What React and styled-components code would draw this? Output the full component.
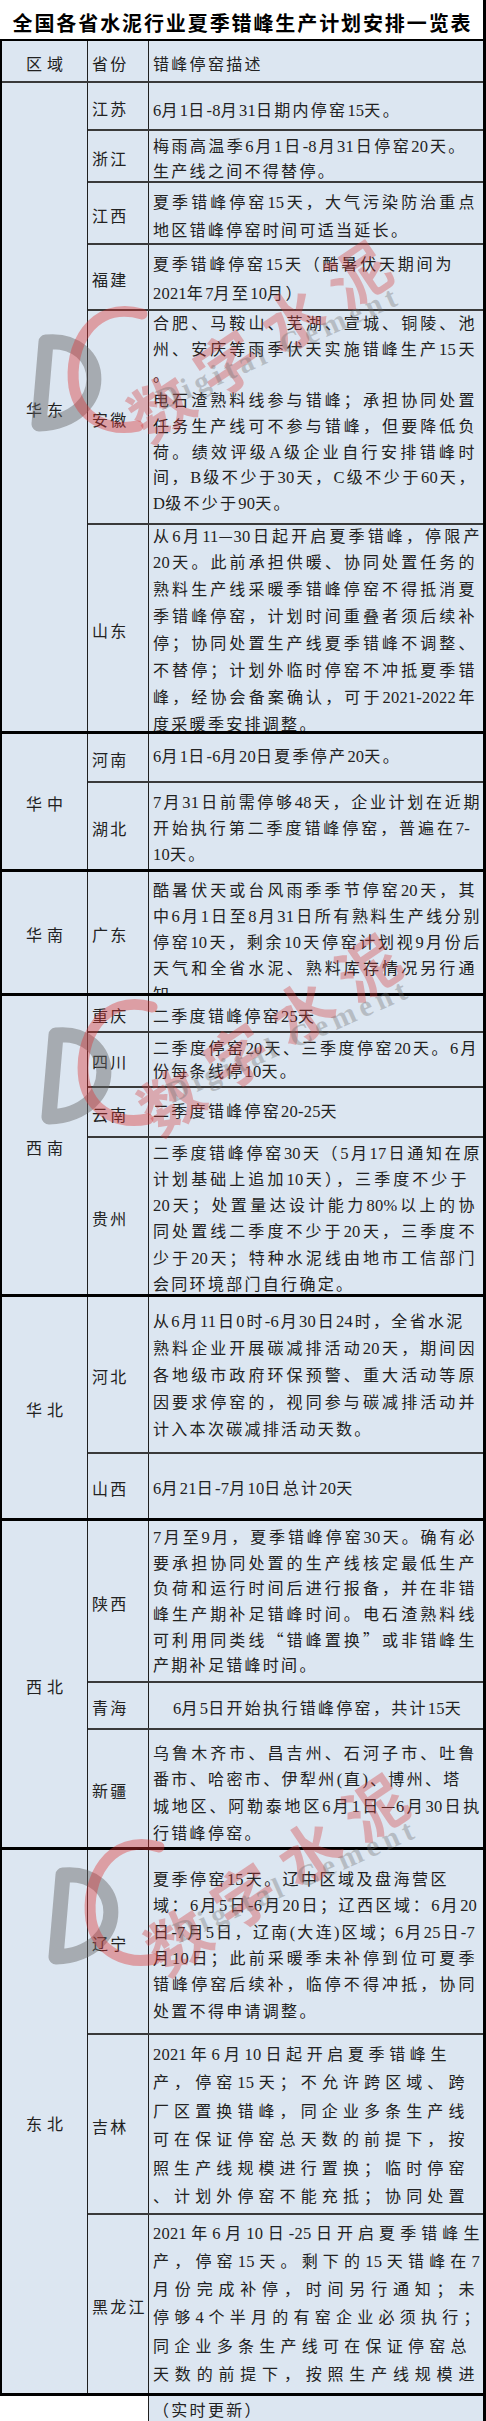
import React from 'react';
import styled, { createGlobalStyle, css } from 'styled-components';

const BLUE = '#dce6f1';
const INK = '#222';
const ROW_LINE = '#3a3a3a';
const V_LINE = '#202020';
const CJK = `"Noto Sans CJK SC", "Noto Sans CJK JP", sans-serif`;
const TEXT_LEFT = 153;

const GlobalStyle = createGlobalStyle`
  html, body { margin: 0; padding: 0; background: #fff; }
  body { font-family: ${CJK}; }
`;

const Page = styled.div`
  position: relative;
  width: 486px;
  box-sizing: border-box;
  border-right: 3px solid #000;
  overflow: hidden;
  color: ${INK};
  font-family: ${CJK};
  font-size: 16px;
`;

const Title = styled.h1`
  margin: 0;
  height: 39px;
  box-sizing: border-box;
  padding: 5px 0 0 2px;
  display: flex;
  align-items: center;
  justify-content: center;
  font-size: 20px;
  font-weight: 700;
  letter-spacing: 1.9px;
  color: #000;
  white-space: nowrap;
`;

const Table = styled.div`
  border-left: 2px solid #000;
  border-top: 2px solid #000;
  background: ${BLUE};
`;

const HeaderRow = styled.div`
  display: flex;
  height: 40px;
`;

const Region = styled.section`
  display: flex;
  border-top: ${(p) => p.$bw}px solid ${(p) => p.$bc};
`;

const RegionCell = styled.div`
  width: 86px;
  flex: none;
  box-sizing: border-box;
  border-right: 1px solid ${V_LINE};
  display: flex;
  align-items: center;
  justify-content: center;
  padding: 3px 0 0 5px;
  letter-spacing: 5px;
  white-space: nowrap;
`;

const Rows = styled.div`
  flex: 1;
  min-width: 0;
  display: flex;
  flex-direction: column;
`;

const Row = styled.div`
  display: flex;
  box-sizing: border-box;
  height: ${(p) => p.$h}px;
  border-top: ${(p) => (p.$first ? 'none' : `2px solid ${ROW_LINE}`)};
`;

const ProvCell = styled.div`
  width: 61px;
  flex: none;
  box-sizing: border-box;
  border-right: 1px solid ${V_LINE};
  display: flex;
  align-items: center;
  padding: 3px 0 0 4px;
  letter-spacing: 2.3px;
  white-space: nowrap;
`;

const HeadDesc = styled.div`
  flex: 1;
  display: flex;
  align-items: center;
  padding: 4px 0 0 4px;
  letter-spacing: 2.3px;
`;

const DescCell = styled.div`
  flex: 1;
  min-width: 0;
  box-sizing: border-box;
  padding-left: 4px;
  overflow: hidden;
  text-align: ${(p) => (p.$center ? 'center' : 'left')};
`;

const TextBlock = styled.div`
  margin-top: ${(p) => p.$top}px;
`;

const Line = styled.div`
  height: ${(p) => p.$lh}px;
  line-height: ${(p) => p.$lh}px;
  white-space: nowrap;
  ${(p) =>
    p.$end
      ? css`
          width: ${p.$end - TEXT_LEFT}px;
          text-align: justify;
          text-align-last: justify;
          letter-spacing: 0.6px;
        `
      : css`
          letter-spacing: 2.3px;
        `}
`;

const Latin = styled.span`
  font-family: "Liberation Serif", serif;
  font-size: 16.5px;
  letter-spacing: 0.2px;
  line-height: 1;
`;

const Footer = styled.div`
  display: flex;
  height: 28px;
  box-sizing: border-box;
  border-top: 3px solid #000;
`;

const FooterBlank = styled.div`
  width: 148px;
  flex: none;
  background: #fff;
`;

const FooterCell = styled.div`
  flex: 1;
  background: ${BLUE};
  border-left: 1px solid ${V_LINE};
  display: flex;
  align-items: center;
  padding-left: 4px;
  letter-spacing: 2.3px;
`;

/* watermark overlay */
const Mark = styled.div`
  position: absolute;
  left: ${(p) => p.$x}px;
  top: ${(p) => p.$y}px;
  width: 440px;
  height: 260px;
  pointer-events: none;
`;

const MarkLogo = styled.svg`
  position: absolute;
  left: 0;
  top: 0;
`;

const MarkCn = styled.div`
  position: absolute;
  left: 104px;
  top: 89px;
  transform: rotate(-34deg);
  transform-origin: 0 50%;
  font-family: ${CJK};
  font-size: 62px;
  line-height: 62px;
  font-weight: 700;
  letter-spacing: 17px;
  color: rgba(214, 60, 60, 0.36);
  white-space: nowrap;
`;

const MarkEn = styled.div`
  position: absolute;
  left: 128px;
  top: 84px;
  transform: rotate(-24deg);
  transform-origin: 0 50%;
  font-family: "Liberation Serif", serif;
  font-size: 30px;
  line-height: 30px;
  font-weight: 700;
  letter-spacing: 5px;
  color: rgba(110, 110, 110, 0.34);
  white-space: nowrap;
`;

const Watermark = ({ x, y }) => (
  <Mark $x={x} $y={y}>
    <MarkLogo width="120" height="135" viewBox="0 0 120 135">
      <path
        d="M16 40 L9 122 M16 40 C 78 34, 84 118, 9 122"
        fill="none"
        stroke="rgba(100,100,100,0.45)"
        strokeWidth="15"
        strokeLinecap="round"
      />
      <path
        d="M112 12 C 62 -2, 38 45, 44 85 C 50 118, 80 130, 108 124"
        fill="none"
        stroke="rgba(220,50,50,0.4)"
        strokeWidth="11"
        strokeLinecap="round"
      />
    </MarkLogo>
    <MarkCn>数字水泥</MarkCn>
    <MarkEn>Digital Cement</MarkEn>
  </Mark>
);

const RUN = /([0-9A-Za-z%().\-]+)/;
const renderText = (t) =>
  t
    .split(RUN)
    .filter(Boolean)
    .map((s, i) =>
      RUN.test(s) ? <Latin key={i}>{s}</Latin> : <React.Fragment key={i}>{s}</React.Fragment>
    );

const parseLine = (raw, isLast) => {
  let t = raw;
  let end = isLast ? null : 475;
  if (t.startsWith('~')) {
    t = t.slice(1);
    end = null;
  }
  const m = t.match(/@(\d+)$/);
  if (m) {
    end = +m[1];
    t = t.slice(0, m.index);
  }
  return { t, end };
};

const regions = [
  {
    name: '华东',
    rows: [
      { p: '江苏', h: 48, y0: 28, lh: 24, lines: ['6月1日-8月31日期内停窑15天。'] },
      { p: '浙江', h: 52, y0: 16, lh: 25, lines: ['梅雨高温季6月1日-8月31日停窑20天。@465', '生产线之间不得替停。'] },
      { p: '江西', h: 62, y0: 20, lh: 28.5, lines: ['夏季错峰停窑15天，大气污染防治重点', '地区错峰停窑时间可适当延长。'] },
      { p: '福建', h: 66, y0: 20.5, lh: 28.5, lines: ['夏季错峰停窑15天（酷暑伏天期间为@452', '2021年7月至10月）'] },
      {
        p: '安徽', h: 214, y0: 14, lh: 25.7,
        lines: [
          '合肥、马鞍山、芜湖、宣城、铜陵、池',
          '州、安庆等雨季伏天实施错峰生产15天',
          '~。',
          '电石渣熟料线参与错峰；承担协同处置',
          '任务生产线可不参与错峰，但要降低负',
          '荷。绩效评级A级企业自行安排错峰时',
          '间，B级不少于30天，C级不少于60天，',
          'D级不少于90天。',
        ],
      },
      {
        p: '山东', h: 208, y0: 12, lh: 26.9,
        lines: [
          '从6月11—30日起开启夏季错峰，停限产@480',
          '20天。此前承担供暖、协同处置任务的',
          '熟料生产线采暖季错峰停窑不得抵消夏',
          '季错峰停窑，计划时间重叠者须后续补',
          '停；协同处置生产线夏季错峰不调整、',
          '不替停；计划外临时停窑不冲抵夏季错',
          '峰，经协会备案确认，可于2021-2022年',
          '度采暖季安排调整。',
        ],
      },
    ],
  },
  {
    name: '华中',
    rows: [
      { p: '河南', h: 50, y0: 24, lh: 24, lines: ['6月1日-6月20日夏季停产20天。'] },
      {
        p: '湖北', h: 88, y0: 20, lh: 26,
        lines: ['7月31日前需停够48天，企业计划在近期@480', '开始执行第二季度错峰停窑，普遍在7-@470', '10天。'],
      },
    ],
  },
  {
    name: '华南',
    rows: [
      {
        p: '广东', h: 124, y0: 20, lh: 26,
        lines: [
          '酷暑伏天或台风雨季季节停窑20天，其',
          '中6月1日至8月31日所有熟料生产线分别@480',
          '停窑10天，剩余10天停窑计划视9月份后@480',
          '天气和全省水泥、熟料库存情况另行通',
          '知。',
        ],
      },
    ],
  },
  {
    name: '西南',
    rows: [
      { p: '重庆', h: 38, y0: 22, lh: 22, lines: ['二季度错峰停窑25天'] },
      { p: '四川', h: 55, y0: 16, lh: 23, lines: ['二季度停窑20天、三季度停窑20天。6月@477', '份每条线停10天。'] },
      { p: '云南', h: 50, y0: 24, lh: 24, lines: ['二季度错峰停窑20-25天'] },
      {
        p: '贵州', h: 158, y0: 16, lh: 26.2,
        lines: [
          '二季度错峰停窑30天（5月17日通知在原@480',
          '计划基础上追加10天），三季度不少于@467',
          '20天；处置量达设计能力80%以上的协',
          '同处置线二季度不少于20天，三季度不',
          '少于20天；特种水泥线由地市工信部门',
          '会同环境部门自行确定。',
        ],
      },
    ],
  },
  {
    name: '华北',
    rows: [
      {
        p: '河北', h: 158, y0: 26, lh: 27,
        lines: [
          '从6月11日0时-6月30日24时，全省水泥@463',
          '熟料企业开展碳减排活动20天，期间因',
          '各地级市政府环保预警、重大活动等原',
          '因要求停窑的，视同参与碳减排活动并',
          '计入本次碳减排活动天数。',
        ],
      },
      { p: '山西', h: 66, y0: 35, lh: 24, lines: ['6月21日-7月10日总计20天'] },
    ],
  },
  {
    name: '西北',
    rows: [
      {
        p: '陕西', h: 163, y0: 19, lh: 25.6,
        lines: [
          '7月至9月，夏季错峰停窑30天。确有必',
          '要承担协同处置的生产线核定最低生产',
          '负荷和运行时间后进行报备，并在非错',
          '峰生产期补足错峰时间。电石渣熟料线',
          '可利用同类线“错峰置换”或非错峰生',
          '产期补足错峰时间。',
        ],
      },
      { p: '青海', h: 47, y0: 26, lh: 24, center: true, lines: ['6月5日开始执行错峰停窑，共计15天'] },
      {
        p: '新疆', h: 119, y0: 24, lh: 26.7,
        lines: [
          '乌鲁木齐市、昌吉州、石河子市、吐鲁',
          '番市、哈密市、伊犁州(直)、博州、塔@460',
          '城地区、阿勒泰地区6月1日—6月30日执@480',
          '行错峰停窑。',
        ],
      },
    ],
  },
  {
    name: '东北',
    rows: [
      {
        p: '辽宁', h: 186, y0: 31, lh: 26.4,
        lines: [
          '夏季停窑15天。辽中区域及盘海营区@447',
          '域：6月5日-6月20日；辽西区域：6月20@477',
          '日-7月5日，辽南(大连)区域；6月25日-7',
          '月10日；此前采暖季未补停到位可夏季',
          '错峰停窑后续补，临停不得冲抵，协同',
          '处置不得申请调整。',
        ],
      },
      {
        p: '吉林', h: 180, y0: 20, lh: 28.5,
        lines: [
          '2021年6月10日起开启夏季错峰生@447',
          '产，停窑15天；不允许跨区域、跨@465',
          '厂区置换错峰，同企业多条生产线@465',
          '可在保证停窑总天数的前提下，按@465',
          '照生产线规模进行置换；临时停窑@465',
          '、计划外停窑不能充抵；协同处置@465',
        ],
      },
      {
        p: '黑龙江', h: 180, y0: 19, lh: 28.2,
        lines: [
          '2021年6月10日-25日开启夏季错峰生@480',
          '产，停窑15天。剩下的15天错峰在7@480',
          '月份完成补停，时间另行通知；未',
          '停够4个半月的有窑企业必须执行；@480',
          '同企业多条生产线可在保证停窑总@467',
          '天数的前提下，按照生产线规模进@475',
        ],
      },
    ],
  },
];

const ProvinceRow = ({ row, first, regionBw }) => {
  const bw = first ? regionBw : 2;
  const height = first ? row.h - regionBw : row.h;
  const top = row.y0 - bw - row.lh / 2;
  return (
    <Row $h={height} $first={first}>
      <ProvCell>{row.p}</ProvCell>
      <DescCell $center={row.center}>
        <TextBlock $top={top}>
          {row.lines.map((raw, i) => {
            const { t, end } = parseLine(raw, i === row.lines.length - 1);
            return (
              <Line key={i} $lh={row.lh} $end={end}>
                {renderText(t)}
              </Line>
            );
          })}
        </TextBlock>
      </DescCell>
    </Row>
  );
};

export default function App() {
  return (
    <>
      <GlobalStyle />
      <Page>
        <Title>全国各省水泥行业夏季错峰生产计划安排一览表</Title>
        <Table>
          <HeaderRow>
            <RegionCell>区域</RegionCell>
            <ProvCell>省份</ProvCell>
            <HeadDesc>错峰停窑描述</HeadDesc>
          </HeaderRow>
          {regions.map((r, i) => {
            const bw = i === 0 ? 2 : 3;
            return (
              <Region key={r.name} $bw={bw} $bc={i === 0 ? ROW_LINE : '#000'}>
                <RegionCell>{r.name}</RegionCell>
                <Rows>
                  {r.rows.map((row, j) => (
                    <ProvinceRow key={row.p} row={row} first={j === 0} regionBw={bw} />
                  ))}
                </Rows>
              </Region>
            );
          })}
        </Table>
        <Footer>
          <FooterBlank />
          <FooterCell>（实时更新）</FooterCell>
        </Footer>
        <Watermark x={30} y={302} />
        <Watermark x={40} y={995} />
        <Watermark x={47} y={1835} />
      </Page>
    </>
  );
}
